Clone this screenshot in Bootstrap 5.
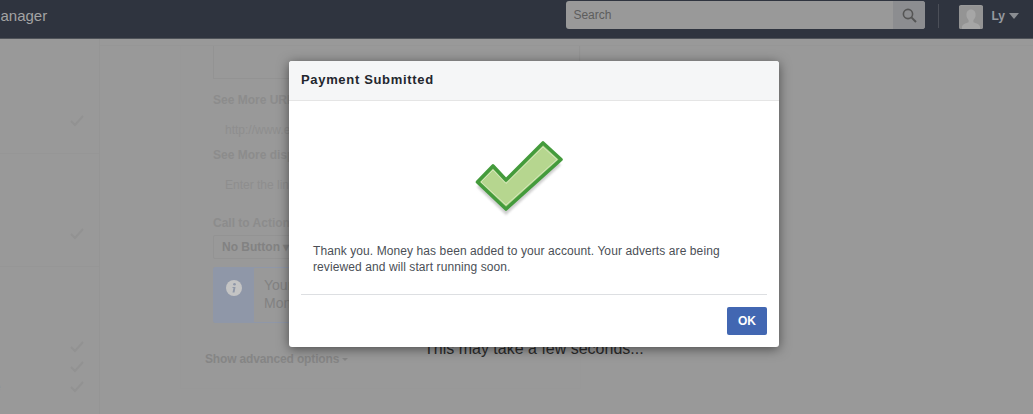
<!DOCTYPE html>
<html lang="en">
<head>
<meta charset="utf-8">
<title>Payment Submitted</title>
<link href="https://cdn.jsdelivr.net/npm/bootstrap@5.3.0/dist/css/bootstrap.min.css" rel="stylesheet">
<style>
html,body{height:414px;overflow:hidden}
body{background:#999;font-family:"Liberation Sans",Arial,sans-serif;color:#333;position:relative}
.topbar{height:39px;background:#2f343f;border-bottom:1px solid #4f5359;color:#a9abaf}
.brandtxt{font-size:15px;margin-left:-12px;line-height:32px;color:#a3a3a3}
.searchbox{width:359px;height:28px;margin-top:1px;background:#999;border-radius:3px;overflow:hidden}
.searchbox .ph{font-size:12px;color:#5d5d5d;padding-left:7px;line-height:28px}
.searchbtn{width:32px;background:#8c8d90}
.vsep{width:1px;height:24px;background:#4b4f58;margin:4px 20px 0 13px}
.avatar{width:24px;height:24px;margin-top:5px;background:#999;border-radius:2px;overflow:hidden}
.uname{font-size:12px;font-weight:700;color:#969a9f;margin-left:8px;line-height:32px}
.caret-d{width:0;height:0;border:5px solid transparent;border-top:6px solid #8a8d92;border-bottom:0;margin:13px 14px 0 4px}
.side{width:100px;height:375px;border-right:1px solid #959595;position:relative;flex:none}
.side svg{display:block;margin-left:70px}
.siderule{height:1px;background:#969696}
.sideword{font-size:12px;color:#8a8a8a;line-height:14px;margin:-13px 0 0 -6px}
.panelwrap{margin-top:6px;border-top:1px solid #969696}
.formbox{width:401px;height:343px;margin-left:80px;border:1px solid #989898;border-top:0;padding:0 0 0 32px}
.toppanel{height:33px;width:367px;border:1px solid #939393;border-top:0;margin-bottom:14px}
.flabel{font-size:12px;font-weight:700;color:#8c8c8c;line-height:14px;white-space:nowrap}
.fholder{font-size:12px;color:#8e8e8e;padding-left:12px;line-height:14px;white-space:nowrap}
.g1{margin-top:16px}
.g2{margin-top:11px}
.g3{margin-top:24px}
.nobtn{width:100px;height:24px;border:1px solid #939393;border-radius:2px;font-size:12px;font-weight:700;color:#828282;padding-left:8px;line-height:22px;margin:5px 0 8px}
.infobox{height:56px;width:367px;border:1px solid #8f97a8;border-radius:2px;font-size:14px;line-height:18px;color:#828282}
.infoicon{width:40px;background:#8f97a8;padding:10px 0 0 12px}
.infotext{padding:8px 0 0 10px}
.advlink{font-size:12px;font-weight:700;color:#858585;margin:27px 0 0 -8px;letter-spacing:-.15px}
.advcaret{display:inline-block;width:0;height:0;border:3px solid transparent;border-top:3px solid #858585;border-bottom:0;margin-left:3px;vertical-align:2px}
.waittext{position:absolute;left:424px;top:339px;font-size:16px;color:#2b2b2b;line-height:20px;margin:0}
.paydlg{position:absolute;left:289px;top:61px;width:490px;height:286px;background:#fff;border-radius:3px;box-shadow:0 2px 12px rgba(0,0,0,.5)}
.payhead{height:40px;background:#f5f6f7;border-bottom:1px solid #e5e5e5;border-radius:3px 3px 0 0;padding-left:12px;font-size:13px;font-weight:700;line-height:38px;color:#23262e;letter-spacing:.67px}
.checkwrap{height:142px;padding:34px 0 0 181px}
.paymsg{font-size:12px;line-height:16px;color:#4b4f56;margin:0 0 0 24px;width:430px;height:51px;letter-spacing:.09px}
.payrule{height:1px;background:#dddfe2;margin:0 12px 12px}
.okbtn{--bs-btn-padding-x:0;--bs-btn-padding-y:0;width:40px;height:28px;background:#4267b2;border:0;color:#fff;font-size:12px;font-weight:700;border-radius:2px;margin-right:12px;line-height:28px}
</style>
</head>
<body>
<header class="topbar d-flex">
  <div class="brandtxt">Manager</div>
  <div class="ms-auto d-flex">
    <div class="searchbox d-flex justify-content-between">
      <div class="ph">Search</div>
      <div class="searchbtn d-flex align-items-center justify-content-center">
        <svg width="15" height="15" viewBox="0 0 15 15" fill="none" stroke="#555" stroke-width="1.6"><circle cx="6" cy="6" r="4.6"/><path d="M9.4 9.4l4.6 4.6" stroke-width="2"/></svg>
      </div>
    </div>
    <div class="vsep"></div>
    <div class="avatar">
      <svg width="24" height="24" viewBox="0 0 24 24"><rect width="24" height="24" fill="#949494"/><path d="M12 3.500c3 0 4.600 2.400 4.600 5.200 0 2.300-1 4.200-2.200 5.300v2.200c2 1 6 1.600 6.600 4.300V24H3v-3.500c.6-2.700 4.600-3.300 6.600-4.300V14C8.400 12.900 7.400 11 7.400 8.700 7.400 5.900 9 3.500 12 3.500z" fill="#a6a6a6"/></svg>
    </div>
    <div class="uname">Ly</div>
    <div class="caret-d"></div>
  </div>
</header>
<main class="d-flex">
  <aside class="side">
    <svg width="14" height="12" viewBox="0 0 14 12" fill="none" stroke="#929292" stroke-width="2" style="margin-top:76px"><path d="M1 6l4 4 8-9"/></svg>
    <div class="siderule" style="margin-top:26px"></div>
    <svg width="14" height="12" viewBox="0 0 14 12" fill="none" stroke="#929292" stroke-width="2" style="margin-top:74px"><path d="M1 6l4 4 8-9"/></svg>
    <div class="siderule" style="margin-top:26px"></div>
    <svg width="14" height="12" viewBox="0 0 14 12" fill="none" stroke="#929292" stroke-width="2" style="margin-top:74px"><path d="M1 6l4 4 8-9"/></svg>
    <svg width="14" height="12" viewBox="0 0 14 12" fill="none" stroke="#929292" stroke-width="2" style="margin-top:8px"><path d="M1 6l4 4 8-9"/></svg>
    <svg width="14" height="12" viewBox="0 0 14 12" fill="none" stroke="#929292" stroke-width="2" style="margin-top:8px"><path d="M1 6l4 4 8-9"/></svg>
    <div class="sideword">e</div>
  </aside>
  <section class="panelwrap flex-grow-1">
    <div class="formbox">
      <div class="toppanel"></div>
      <div class="flabel">See More URL</div>
      <div class="fholder g1">http://www.example.com</div>
      <div class="flabel g2">See More display URL</div>
      <div class="fholder g1">Enter the link</div>
      <div class="flabel g3">Call to Action</div>
      <div class="nobtn">No Button ▾</div>
      <div class="infobox d-flex">
        <div class="infoicon">
          <svg width="16" height="16" viewBox="0 0 16 16"><circle cx="8" cy="8" r="8" fill="#c4c4c4"/><circle cx="8.500" cy="4.200" r="1.300" fill="#8f97a8"/><path d="M6.500 7h3l-1 5.500h-2l1-4.500h-1z" fill="#8f97a8"/></svg>
        </div>
        <div class="infotext">Your<br>Money</div>
      </div>
      <div class="advlink">Show advanced options<span class="advcaret"></span></div>
    </div>
  </section>
</main>
<p class="waittext">This may take a few seconds...</p>
<div class="paydlg" role="dialog">
  <div class="payhead">Payment Submitted</div>
  <div class="checkwrap">
    <svg width="100" height="90" viewBox="0 0 100 90">
      <defs><filter id="softedge" x="-20%" y="-20%" width="140%" height="140%"><feGaussianBlur stdDeviation="1.2"/></filter></defs>
      <path d="M7 52L23 36 36 50 73 13 91 30 36 80z" fill="#cfcfcf" filter="url(#softedge)"/>
      <path d="M7.500 47L23 31 36 45 73 8 91 24.500 36 74z" fill="#b6d68f" stroke="#449b3c" stroke-width="3.600" stroke-linejoin="round"/>
      <path d="M11 47L23 35 36 48.500 73 12 87 24.500 36 70z" fill="none" stroke="#dcebc8" stroke-width=".8"/>
    </svg>
  </div>
  <p class="paymsg">Thank you. Money has been added to your account. Your adverts are being reviewed and will start running soon.</p>
  <div class="payrule"></div>
  <div class="d-flex justify-content-end"><button type="button" class="btn okbtn">OK</button></div>
</div>
<script src="https://cdn.jsdelivr.net/npm/bootstrap@5.3.0/dist/js/bootstrap.bundle.min.js"></script>
</body>
</html>
